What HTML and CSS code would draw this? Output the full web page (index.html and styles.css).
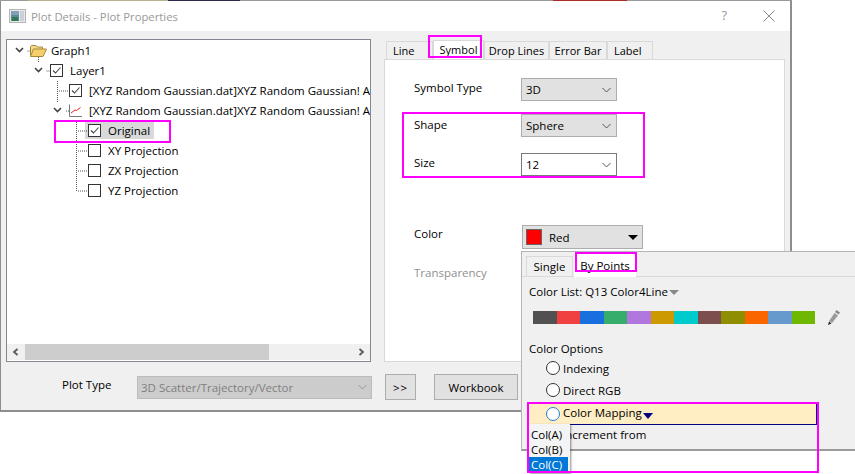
FILE: index.html
```html
<!DOCTYPE html>
<html lang="en">
<head>
<meta charset="utf-8">
<title>Plot Details - Plot Properties</title>
<link rel="stylesheet" href="styles.css">
</head>
<body>
<div class="screen">
  <div class="topstrip"></div>
  <div class="dialog">
    <header class="titlebar">
      <svg class="appicon" width="17" height="14" viewBox="0 0 17 14"><rect x="0.5" y="0.5" width="16" height="13" fill="#e8e8e8" stroke="#b5b5b5"/><rect x="2" y="2" width="8" height="10" fill="#5d8a94"/><rect x="2" y="2" width="8" height="4" fill="#7f9fb5"/><rect x="3" y="8" width="6" height="4" fill="#2f7a55"/><rect x="11" y="2" width="4" height="10" fill="#c9d0d6"/></svg>
      <span class="title">Plot Details - Plot Properties</span>
      <span class="help">?</span>
      <svg class="close" width="12" height="12" viewBox="0 0 12 12"><path d="M0.5 0.5L11.5 11.5M11.5 0.5L0.5 11.5" stroke="#8a8a8a" stroke-width="1" fill="none"/></svg>
    </header>
    <div class="content">
      <div class="main">
        <section class="tree">
          <div class="tree-rows">
            <div class="row d0">
              <svg class="chev" width="9" height="6" viewBox="0 0 9 6"><path d="M1 1L4.5 4.5L8 1" stroke="#444" stroke-width="1.6" fill="none"/></svg>
              <svg class="folder" width="17" height="13" viewBox="0 0 17 13"><path d="M0.5 11.5V2.5L1.5 1.5H6L7 3H12.5V5" fill="#f2d98c" stroke="#a98a3c"/><path d="M0.5 12.5L3.5 5H16.5L13 12.5Z" fill="#f6cf6a" stroke="#a98a3c"/></svg>
              <span class="label g">Graph1</span>
            </div>
            <div class="row d1">
              <svg class="chev" width="9" height="6" viewBox="0 0 9 6"><path d="M1 1L4.5 4.5L8 1" stroke="#444" stroke-width="1.6" fill="none"/></svg>
              <span class="check on"><svg width="11" height="11" viewBox="0 0 11 11"><path d="M2 5.5L4.5 8L9.5 2.5" stroke="#444" stroke-width="1.1" fill="none"/></svg></span>
              <span class="label">Layer1</span>
            </div>
            <div class="row d2">
              <span class="check on"><svg width="11" height="11" viewBox="0 0 11 11"><path d="M2 5.5L4.5 8L9.5 2.5" stroke="#444" stroke-width="1.1" fill="none"/></svg></span>
              <span class="label clip">[XYZ Random Gaussian.dat]XYZ Random Gaussian! A</span>
            </div>
            <div class="row d2b">
              <svg class="chev" width="9" height="6" viewBox="0 0 9 6"><path d="M1 1L4.5 4.5L8 1" stroke="#444" stroke-width="1.6" fill="none"/></svg>
              <svg class="ploticon" width="13" height="13" viewBox="0 0 13 13"><path d="M0.5 0.5V12.5H13" stroke="#777" fill="none"/><path d="M2 9L6 6L7.5 6.5L11.5 3.5" stroke="#e02020" fill="none"/></svg>
              <span class="label clip">[XYZ Random Gaussian.dat]XYZ Random Gaussian! A</span>
            </div>
            <div class="row d3">
              <div class="selected">
                <span class="check on"><svg width="11" height="11" viewBox="0 0 11 11"><path d="M2 5.5L4.5 8L9.5 2.5" stroke="#444" stroke-width="1.1" fill="none"/></svg></span>
                <span class="label">Original</span>
              </div>
            </div>
            <div class="row d3"><span class="check"></span><span class="label">XY Projection</span></div>
            <div class="row d3"><span class="check"></span><span class="label">ZX Projection</span></div>
            <div class="row d3"><span class="check"></span><span class="label">YZ Projection</span></div>
          </div>
          <svg class="connectors" width="363" height="170" viewBox="0 0 363 170"><path d="M20.5 11H24M31.5 17V23M39.5 31H43M50.5 41V62M52 51H62M59 71H62M69.5 82V151M71 91H80M71 111H80M71 131H80M71 151H80" stroke="#555" stroke-dasharray="1 1" fill="none"/></svg>
          <div class="hscroll">
            <svg class="arrow" width="7" height="8" viewBox="0 0 7 8"><path d="M5.5 1L2 4L5.5 7" stroke="#555" stroke-width="1.7" fill="none"/></svg>
            <div class="track"><div class="thumb"></div></div>
            <svg class="arrow" width="7" height="8" viewBox="0 0 7 8"><path d="M1.5 1L5 4L1.5 7" stroke="#555" stroke-width="1.7" fill="none"/></svg>
          </div>
        </section>
        <section class="props">
          <nav class="tabs">
            <span class="tab t-line">Line</span>
            <span class="tab active">Symbol</span>
            <span class="tab t-drop">Drop Lines</span>
            <span class="tab t-err">Error Bar</span>
            <span class="tab t-label">Label</span>
          </nav>
          <div class="panel">
            <div class="field f-type">
              <span class="flabel">Symbol Type</span>
              <div class="combo"><span>3D</span><svg width="9" height="6" viewBox="0 0 9 6"><path d="M0.5 1L4.5 5L8.5 1" stroke="#555" fill="none"/></svg></div>
            </div>
            <div class="field f-shape">
              <span class="flabel">Shape</span>
              <div class="combo"><span>Sphere</span><svg width="9" height="6" viewBox="0 0 9 6"><path d="M0.5 1L4.5 5L8.5 1" stroke="#555" fill="none"/></svg></div>
            </div>
            <div class="field f-size">
              <span class="flabel">Size</span>
              <div class="combo edit"><span>12</span><svg width="9" height="6" viewBox="0 0 9 6"><path d="M0.5 1L4.5 5L8.5 1" stroke="#555" fill="none"/></svg></div>
            </div>
            <div class="field f-color">
              <span class="flabel">Color</span>
              <div class="colorbtn"><span class="swatch"></span><span class="cname">Red</span><span class="tri"></span></div>
            </div>
            <div class="field f-trans"><span class="flabel muted">Transparency</span></div>
          </div>
        </section>
      </div>
      <footer class="bottom">
        <span class="ptlabel">Plot Type</span>
        <div class="ptselect"><span>3D Scatter/Trajectory/Vector</span><svg width="9" height="6" viewBox="0 0 9 6"><path d="M0.5 1L4.5 5L8.5 1" stroke="#999" fill="none"/></svg></div>
        <button class="btn b-more">&gt;&gt;</button>
        <button class="btn b-wb">Workbook</button>
      </footer>
    </div>
  </div>

  <div class="popup">
    <div class="ptabs">
      <span class="ptab">Single</span>
      <span class="ptab pactive">By Points</span>
    </div>
    <div class="pbody">
      <div class="clist"><span>Color List: Q13 Color4Line</span><span class="gtri"></span></div>
      <div class="palette">
        <div class="swatches">
          <i class="c1"></i><i class="c2"></i><i class="c3"></i><i class="c4"></i><i class="c5"></i><i class="c6"></i><i class="c7"></i><i class="c8"></i><i class="c9"></i><i class="c10"></i><i class="c11"></i><i class="c12"></i>
        </div>
        <svg class="pencil" width="14" height="17" viewBox="0 0 14 17"><path d="M9.5 1L13 3.5L11.5 5.5L8 3Z" fill="#8a8a8a"/><path d="M7.5 4L11 6.5L5 14L2 12Z" fill="#9a9a9a"/><path d="M2 12.5L4.5 14.5L1 16Z" fill="#222"/></svg>
      </div>
      <div class="copts">Color Options</div>
      <label class="radio r1"><span class="rb"></span>Indexing</label>
      <label class="radio r2"><span class="rb"></span>Direct RGB</label>
      <div class="mapping"><span class="rb blue"></span><span>Color Mapping</span><span class="ntri"></span></div>
      <div class="incr">Increment from</div>
    </div>
  </div>

  <ul class="dropdown">
    <li>Col(A)</li>
    <li>Col(B)</li>
    <li class="sel">Col(C)</li>
  </ul>

  <div class="mark m-orig"></div>
  <div class="mark m-sym"></div>
  <div class="mark m-shape"></div>
  <div class="mark m-by"></div>
  <div class="mark m-map"></div>
</div>
</body>
</html>
```
FILE: styles.css
```css
* { box-sizing: border-box; }
html, body { margin: 0; padding: 0; background: #fff; }
body { font-family: "Open Sans", "Noto Sans", "Liberation Sans", sans-serif; font-size: 11.5px; color: #000; }
.screen { position: relative; width: 855px; height: 474px; overflow: hidden; }
.topstrip { height: 1px; background: linear-gradient(to right, #999 0 28px, #b9b291 28px 168px, #2c2a4a 168px 240px, #999 240px 553px, #b02a2a 553px 627px, #999 627px 792px, #fff 792px); }
.dialog { width: 792px; height: 411px; border: 1px solid #8e8e8e; border-width: 0 2px 2px 1px; background: #f0f0f0; display: flex; flex-direction: column; }
.titlebar { height: 30px; background: #fff; display: flex; align-items: center; padding: 0 15px 0 8px; flex: none; }
.appicon { margin-right: 5px; }
.title { color: #999; font-size: 11.3px; flex: 1; }
.help { color: #999; margin-right: 36px; font-size: 13px; margin-top: -2px; }
.content { flex: 1; display: flex; flex-direction: column; padding: 8px 5px 0 5px; }
.main { display: flex; height: 323px; }
.tree { position: relative; width: 365px; height: 323px; border: 1px solid #828790; background: #fff; display: flex; flex-direction: column; flex: none; }
.tree-rows { flex: 1; overflow: hidden; }
.row { display: flex; align-items: center; height: 20px; }
.d0 { padding-left: 8px; }
.d1 { padding-left: 27px; }
.d2 { padding-left: 62px; }
.d2b { padding-left: 46px; }
.d3 { padding-left: 81px; }
.chev { flex: none; margin-right: 7px; }
.d0 .chev { margin-right: 6px; }
.folder { flex: none; margin-right: 4px; }
.check { flex: none; width: 13px; height: 13px; border: 1px solid #333; background: #fff; display: inline-flex; align-items: center; justify-content: center; margin-right: 7px; }
.ploticon { flex: none; margin-right: 7px; }
.clip { white-space: nowrap; overflow: hidden; }
.label { white-space: nowrap; }
.selected { display: flex; align-items: center; height: 18px; width: 69px; margin-left: -3px; padding-left: 3px; background: #d9d9d9; }
.connectors { position: absolute; left: 0; top: 0; pointer-events: none; }
.hscroll { flex: none; height: 16px; margin-bottom: 1px; background: #f0f0f0; display: flex; align-items: center; justify-content: space-between; padding: 0 5px; }
.track { flex: 1; height: 16px; margin: 0 1px 0 6px; }
.thumb { width: 244px; height: 100%; background: #cdcdcd; }
.props { margin-left: 13px; width: 401px; display: flex; flex-direction: column; flex: none; }
.tabs { display: flex; height: 20px; align-items: flex-end; padding-left: 2px; font-size: 11px; }
.tab { height: 18px; border: 1px solid #d9d9d9; border-bottom: 0; background: #f0f0f0; display: flex; align-items: center; justify-content: center; }
.t-line { width: 47px; justify-content: flex-start; padding-left: 6px; }
.active { width: 51px; height: 20px; background: #fff; margin-bottom: -1px; padding-bottom: 3px; }
.t-drop { width: 65px; }
.t-err { width: 58px; }
.t-label { width: 46px; justify-content: flex-start; padding-left: 6px; }
.panel { flex: 1; background: #fff; border: 1px solid #d9d9d9; padding: 18px 0 0 29px; }
.field { display: flex; align-items: flex-start; }
.flabel { width: 107px; line-height: 18px; flex: none; margin-top: 1px; }
.f-shape { margin-top: 13px; }
.f-shape .flabel { margin-top: 2px; }
.f-size { margin-top: 16px; }
.f-color { margin-top: 49px; }
.f-color .flabel { margin-top: 0; }
.f-trans { margin-top: 14px; }
.muted { color: #909090; }
.combo { width: 96px; height: 23px; background: #e1e1e1; border: 1px solid #adadad; display: flex; align-items: center; justify-content: space-between; padding: 0 5px 0 4px; }
.edit { background: #fff; border-color: #7a7a7a; }
.colorbtn { width: 121px; height: 24px; background: #e1e1e1; border: 1px solid #adadad; margin-left: 1px; display: flex; align-items: center; padding: 0 3px; }
.swatch { width: 16px; height: 16px; background: #f00; border: 1px solid #666; margin-right: 7px; }
.cname { flex: 1; }
.tri { width: 0; height: 0; border: 5px solid transparent; border-top: 5px solid #000; border-bottom: 0; margin-right: 1px; }
.bottom { display: flex; align-items: center; height: 26px; margin-top: 12px; }
.ptlabel { margin-left: 56px; width: 75px; margin-top: -6px; flex: none; }
.ptselect { width: 235px; height: 23px; background: #cccccc; border: 1px solid #bcbcbc; color: #808080; display: flex; align-items: center; justify-content: space-between; padding: 0 4px 0 3px; flex: none; }
.btn { font: inherit; color: #000; height: 26px; background: #e1e1e1; border: 1px solid #adadad; padding: 0; flex: none; }
.b-more { width: 31px; margin-left: 13px; letter-spacing: 1px; }
.b-wb { width: 84px; margin-left: 18px; }
.popup { position: absolute; left: 521px; top: 251px; width: 334px; height: 200px; background: #f0f0f0; border: 1px solid #b5b5b5; border-right: 0; border-bottom: 2px solid #9a9a9a; }
.ptabs { display: flex; height: 25px; align-items: flex-end; padding-left: 4px; border-bottom: 1px solid #d9d9d9; }
.ptab { display: flex; align-items: center; justify-content: center; height: 20px; width: 47px; border: 1px solid #d9d9d9; border-bottom: 0; }
.pactive { height: 24px; width: 62px; background: #fff; border: 0; margin: 0 0 -1px 1px; }
.pbody { padding: 5px 0 0 7px; }
.clist { display: flex; align-items: center; height: 18px; }
.gtri { width: 0; height: 0; border: 5.5px solid transparent; border-top: 5px solid #888; border-bottom: 0; margin: 3px 0 0 1px; }
.palette { display: flex; align-items: center; margin: 9px 0 0 4px; height: 17px; }
.swatches { display: flex; width: 282px; height: 13px; }
.swatches i { display: block; flex: 1; }
.c1 { background: #515151; } .c2 { background: #f14040; } .c3 { background: #1a6fdf; } .c4 { background: #37ad6b; }
.c5 { background: #b177de; } .c6 { background: #cc9900; } .c7 { background: #00cbcc; } .c8 { background: #7d4e4e; }
.c9 { background: #8e8e00; } .c10 { background: #fb6500; } .c11 { background: #6699cc; } .c12 { background: #6fb802; }
.pencil { margin-left: 12px; }
.copts { margin-top: 14px; line-height: 18px; }
.radio { display: flex; align-items: center; height: 18px; padding-left: 17px; }
.r1 { margin-top: 1px; }
.r2 { margin-top: 4px; }
.rb { width: 14px; height: 14px; border: 1.5px solid #333; border-radius: 50%; background: #fff; margin-right: 3px; flex: none; }
.blue { border-color: #1f7ed0; }
.mapping { display: flex; align-items: center; height: 22px; margin: 4px 0 0 -1px; width: 289px; padding-left: 18px; background: #ffedc4; border-right: 1px solid #000080; border-bottom: 1px solid #000080; }
.mapping span:nth-child(2) { margin-top: -2px; }
.ntri { width: 0; height: 0; border: 5.5px solid transparent; border-top: 6px solid #000080; border-bottom: 0; margin: 4px 0 0 1px; }
.incr { padding-left: 33px; margin-top: 1px; line-height: 18px; }
.dropdown { position: absolute; left: 529px; top: 424px; width: 41px; height: 49px; margin: 0; padding: 3px 0 0; list-style: none; background: #f4f4f4; box-shadow: 1px 1px 2px rgba(0,0,0,.45); }
.dropdown li { height: 15px; line-height: 15px; padding-left: 2px; }
.dropdown .sel { background: #0078d7; color: #fff; margin-right: 2px; }
.mark { position: absolute; border: 2px solid #ff00ff; pointer-events: none; }
.m-orig { left: 54px; top: 120px; width: 117px; height: 23px; }
.m-sym { left: 428px; top: 35px; width: 54px; height: 23px; }
.m-shape { left: 402px; top: 112px; width: 243px; height: 66px; }
.m-by { left: 575px; top: 252px; width: 62px; height: 20px; }
.m-map { left: 527px; top: 402px; width: 292px; height: 71px; }
```
